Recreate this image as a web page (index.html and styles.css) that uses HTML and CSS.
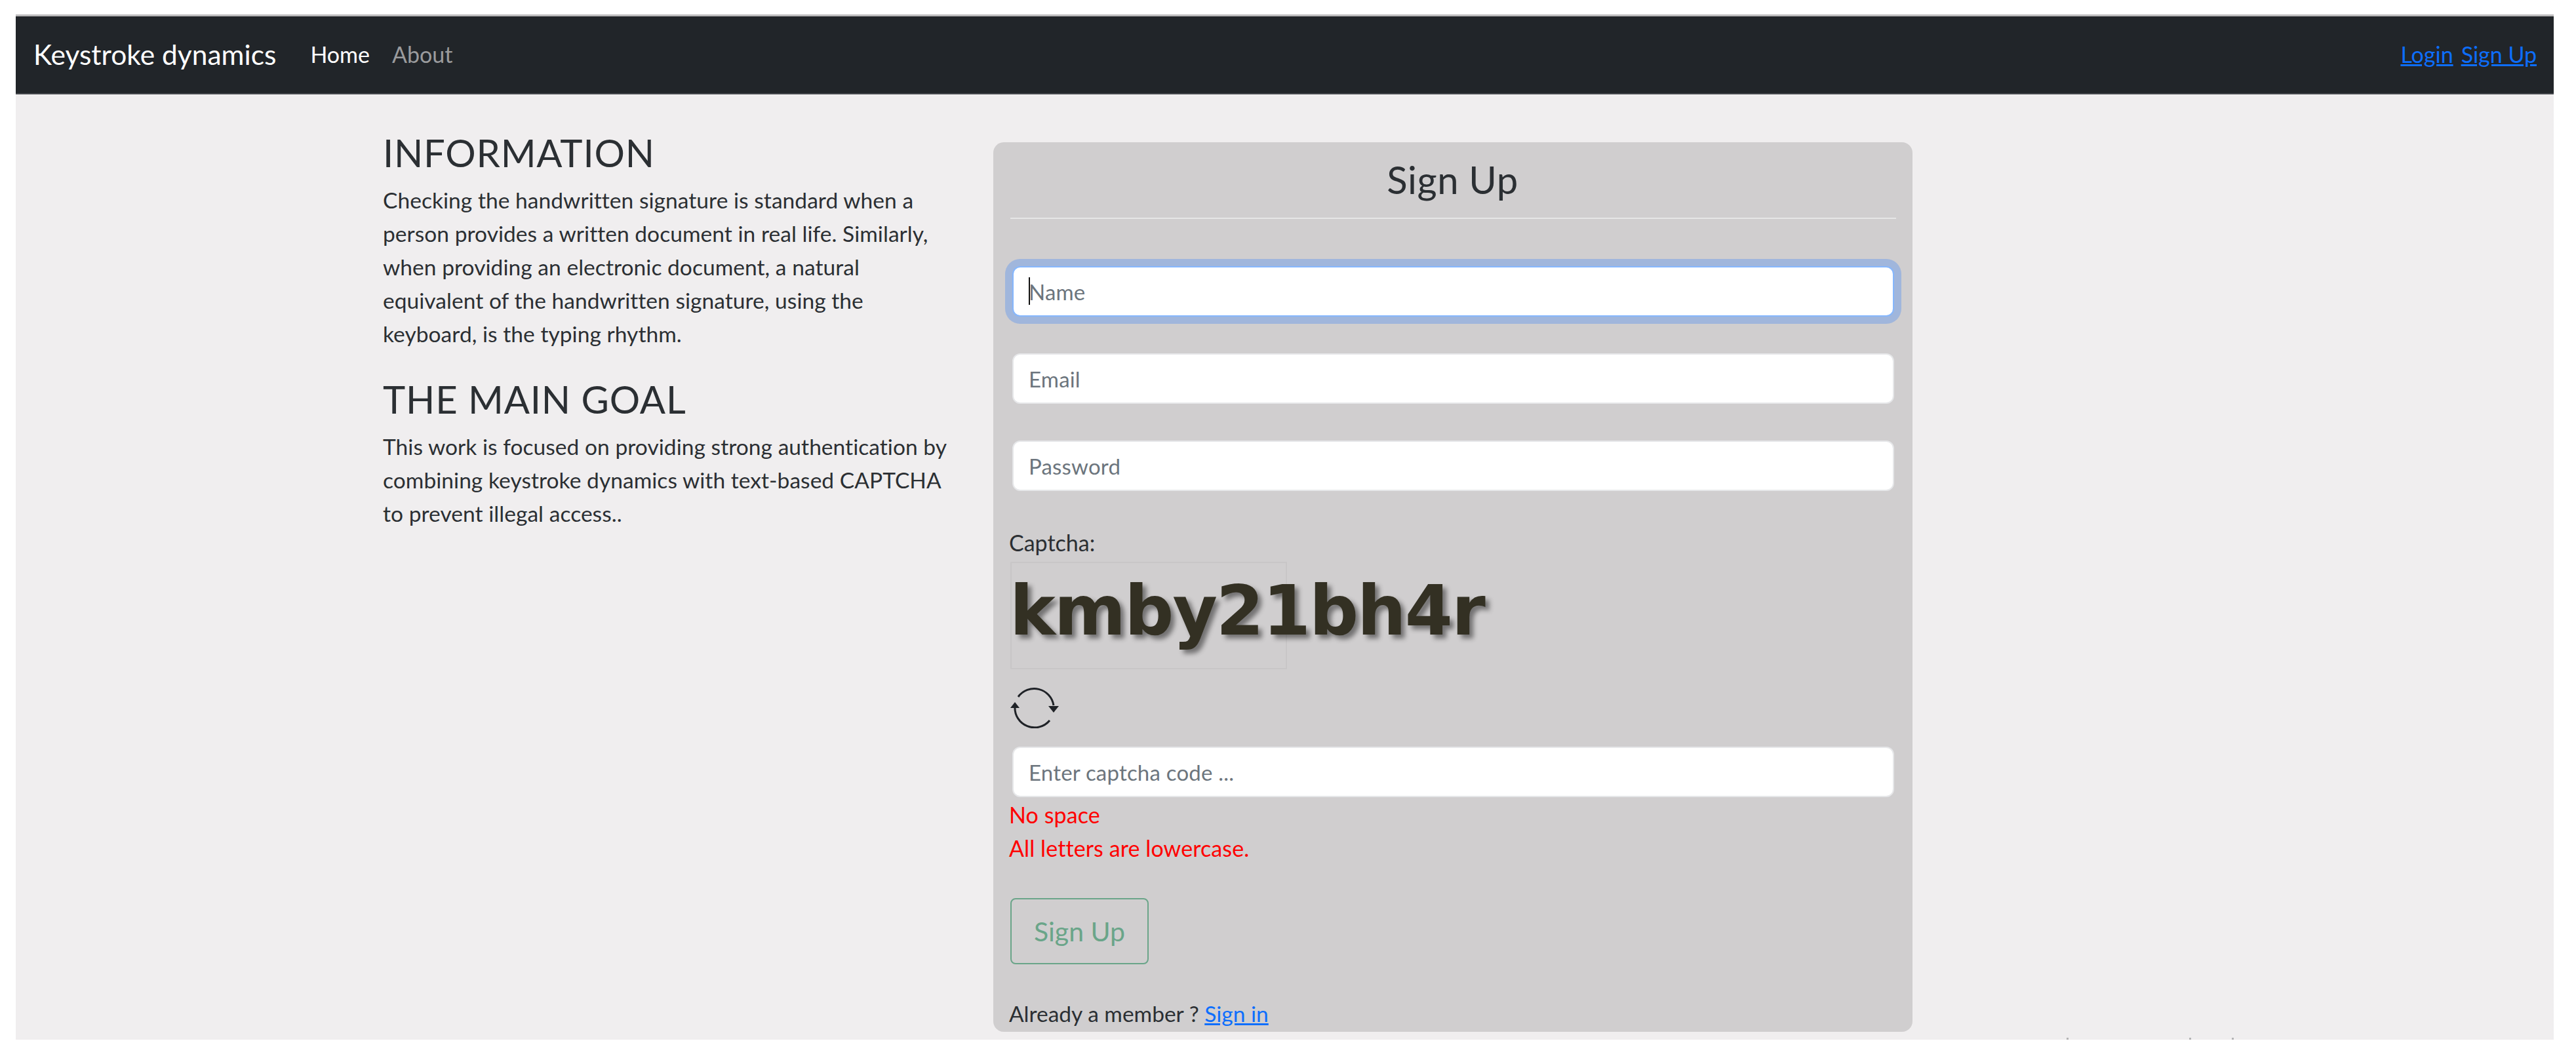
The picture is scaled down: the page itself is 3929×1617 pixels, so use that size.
FILE: index.html
```html
<!DOCTYPE html>
<html lang="en">
<head>
<meta charset="utf-8">
<title>Keystroke dynamics</title>
<link rel="stylesheet" href="styles.css">
</head>
<body>
<div class="frame">
  <nav class="navbar">
    <a class="brand" href="#">Keystroke dynamics</a>
    <a class="nav-link active" href="#">Home</a>
    <a class="nav-link" href="#">About</a>
    <div class="nav-right">
      <a class="auth-link" href="#">Login</a>
      <a class="auth-link" href="#">Sign Up</a>
    </div>
  </nav>
  <main class="content">
    <section class="info">
      <h3 class="info-title">INFORMATION</h3>
      <p class="info-text">Checking the handwritten signature is standard when a person provides a written document in real life. Similarly, when providing an electronic document, a natural equivalent of the handwritten signature, using the keyboard, is the typing rhythm.</p>
      <h3 class="info-title second">THE MAIN GOAL</h3>
      <p class="info-text">This work is focused on providing strong authentication by combining keystroke dynamics with text-based CAPTCHA to prevent illegal access..</p>
    </section>
    <section class="card">
      <h3 class="card-title">Sign Up</h3>
      <hr class="rule">
      <div class="field focused"><input class="input" type="text" placeholder="Name"></div>
      <div class="field"><input class="input" type="text" placeholder="Email"></div>
      <div class="field"><input class="input" type="password" placeholder="Password"></div>
      <div class="captcha-label">Captcha:</div>
      <div class="captcha-box"><span class="captcha-text">kmby21bh4r</span></div>
      <svg class="refresh" width="74" height="64" viewBox="0 0 74 64" aria-hidden="true">
        <path d="M12 16 A30 30 0 0 1 66 29" fill="none" stroke="#1f2227" stroke-width="3"/>
        <path d="M7 31 A30 30 0 0 0 60 52" fill="none" stroke="#1f2227" stroke-width="3"/>
        <path d="M0 33 L7 24 L14 33 Z" fill="#1f2227"/>
        <path d="M58 30 L74 30 L66 40 Z" fill="#1f2227"/>
      </svg>
      <input class="input code" type="text" placeholder="Enter captcha code ...">
      <div class="hint first">No space</div>
      <div class="hint">All letters are lowercase.</div>
      <button class="submit" type="button">Sign Up</button>
      <p class="member">Already a member ? <a class="member-link" href="#">Sign in</a></p>
    </section>
  </main>
  <i class="clip-mark one"></i><i class="clip-mark two"></i><i class="clip-mark three"></i>
</div>
</body>
</html>
```
FILE: styles.css
```css
* { box-sizing: border-box; }
html, body { margin: 0; background: #fff; }
body {
  padding: 22px 34px 0 24px;
  font-family: Lato, "Noto Sans", sans-serif;
  font-size: 32px;
  color: #212529;
}
.frame {
  position: relative;
  height: 1564px;
  overflow: hidden;
  background: #f0eeef;
  border-top: 3px solid #bcbbbc;
}
.navbar {
  height: 119px;
  display: flex;
  align-items: center;
  padding: 0 26px 2px 27px;
  background: #212529;
  border-bottom: 2px solid #44474b;
}
.brand { color: #fff; font-size: 42.5px; text-decoration: none; margin-right: 52px; }
.nav-link { color: #9a9b9d; font-size: 34px; text-decoration: none; margin-right: 34px; }
.nav-link.active { color: #fff; }
.nav-right { margin-left: auto; display: flex; gap: 12px; }
.auth-link { color: #0d6efd; font-size: 34px; }
.content { display: flex; align-items: flex-start; padding: 53px 0 0 560px; }
.info { width: 870px; margin: 2px 61px 0 0; }
.info-title { margin: 0 0 14px; font-size: 58px; font-weight: 400; line-height: 67px; letter-spacing: .8px; color: #2b2f33; }
.info-title.second { margin-top: 40px; }
.info-text { margin: 0; font-size: 33.5px; line-height: 51px; letter-spacing: .05px; color: #2b2f33; }
.card {
  width: 1402px;
  height: 1357px;
  margin-top: 20px;
  padding: 0 25px 0 24px;
  background: #d0cecf;
  border-radius: 16px;
}
.card-title { margin: 0; padding-top: 23px; font-size: 58px; font-weight: 400; line-height: 67px; letter-spacing: .5px; text-align: center; color: #2b2f33; }
.rule { margin: 25px 0 0 2px; border: 0; height: 2px; background: #e6e6e6; }
.field { position: relative; margin: 0 0 56px; }
.input {
  display: block;
  width: 1345px;
  height: 77px;
  margin: 0 0 0 5px;
  padding: 0 23px;
  font: 33px Lato, "Noto Sans", sans-serif;
  letter-spacing: .2px;
  color: #212529;
  background: #fff;
  border: 2px solid #e6e7e9;
  border-radius: 12px;
  outline: none;
}
.input::placeholder { color: #6c757d; opacity: 1; }
.field.focused { margin-top: 72px; }
.field.focused .input { border-color: #86b7fd; box-shadow: 0 0 0 11px #a0b6dc; }
.field.focused::after {
  content: "";
  position: absolute;
  left: 30px;
  top: 17px;
  width: 2px;
  height: 42px;
  background: #111;
}
.captcha-label { margin-top: -3px; font-size: 34px; line-height: 51px; color: #2b2f33; }
.captcha-box {
  width: 422px;
  height: 164px;
  margin: 4px 0 0 2px;
  padding: 0;
  border: 2px solid #c8c6c7;
  white-space: nowrap;
}
.captcha-text {
  display: block;
  margin-left: -3px;
  font-family: "DejaVu Sans", sans-serif;
  font-weight: 700;
  font-size: 105px;
  letter-spacing: -2px;
  line-height: 130px;
  padding-top: 8px;
  color: #333023;
  text-shadow: 6px 6px 7px rgba(0, 0, 0, .45);
}
.refresh { display: block; margin: 26px 0 0 2px; }
.input.code { margin-top: 28px; }
.hint { color: #f00; font-size: 34px; line-height: 51px; letter-spacing: .1px; }
.hint.first { margin-top: 1px; }
.submit {
  display: block;
  width: 211px;
  height: 101px;
  margin: 51px 0 0 2px;
  padding: 0;
  font: 41px Lato, "Noto Sans", sans-serif;
  color: #6aa589;
  background: transparent;
  border: 2px solid #6aa589;
  border-radius: 8px;
}
.member { margin: 50px 0 0; font-size: 33.5px; line-height: 51px; color: #2b2f33; }
.member-link { color: #0d6efd; }
.clip-mark { position: absolute; bottom: 0; width: 3px; height: 3px; background: #b5b4b5; }
.clip-mark.one { left: 3128px; }
.clip-mark.two { left: 3315px; }
.clip-mark.three { left: 3380px; }
```
